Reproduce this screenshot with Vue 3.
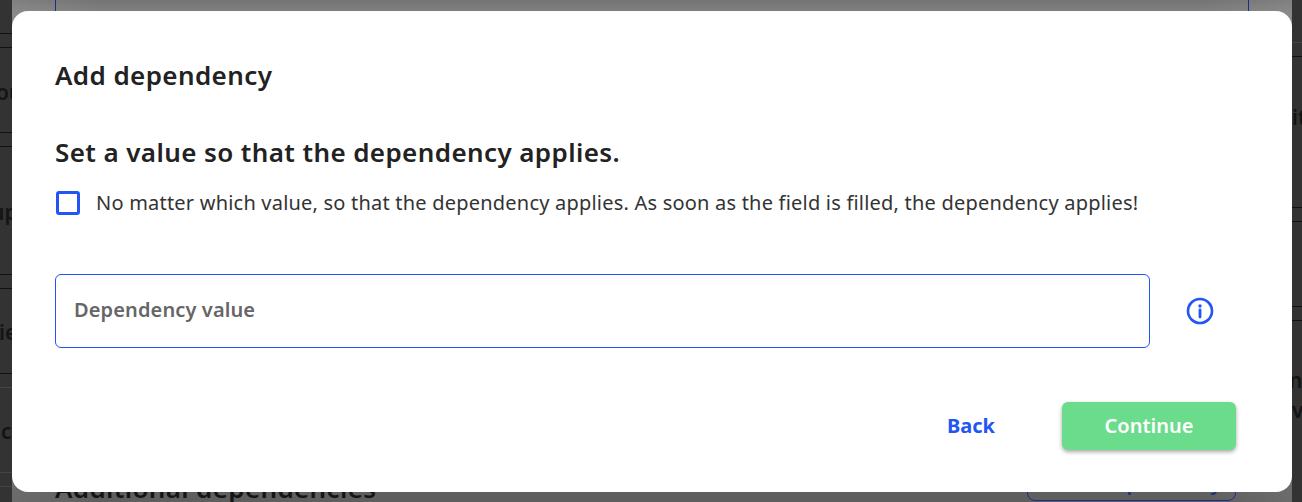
<script setup>
const leftRules = [
  { y: 33, c: '#111' }, { y: 47, c: '#111' }, { y: 132, c: '#111' }, { y: 146, c: '#111' },
  { y: 274, c: '#111' }, { y: 288, c: '#111' }, { y: 373, c: '#111' }, { y: 387, c: '#444' },
  { y: 472, c: '#444' }, { y: 486, c: '#444' }
]
const rightRules = [
  { y: 42, c: '#444' }, { y: 56, c: '#111' }, { y: 207, c: '#111' }, { y: 221, c: '#111' },
  { y: 306, c: '#111' }, { y: 320, c: '#111' }
]
const leftFrags = [
  { t: 'ou', y: 78, x: -4 }, { t: 'up', y: 198, x: -9 }, { t: 'ie', y: 318, x: -1 }, { t: 'cl', y: 417, x: 1 }
]
const rightFrags = [
  { t: 'it', y: 103, x: 0 }, { t: 'ne', y: 366, x: -3 }, { t: 'vi', y: 396, x: 0 }
]
</script>

<template>
  <div class="page">
    <div class="backdrop">
      <div class="side side-left">
        <span v-for="r in leftRules" :key="r.y" class="rule" :style="{ top: r.y + 'px', background: r.c }"></span>
        <span v-for="f in leftFrags" :key="f.t" class="frag" :style="{ top: f.y + 'px', left: f.x + 'px' }">{{ f.t }}</span>
      </div>
      <div class="middle">
        <span class="line line-l"></span>
        <span class="line line-r"></span>
        <div class="under">Additional dependencies</div>
        <div class="under-btn">Add dependency</div>
      </div>
      <div class="side side-right">
        <span v-for="r in rightRules" :key="r.y" class="rule" :style="{ top: r.y + 'px', background: r.c }"></span>
        <span v-for="f in rightFrags" :key="f.t" class="frag" :style="{ top: f.y + 'px', left: f.x + 'px' }">{{ f.t }}</span>
      </div>
    </div>

    <div class="dialog">
      <h2 class="title">Add dependency</h2>
      <h3 class="subtitle">Set a value so that the dependency applies.</h3>
      <label class="check-row">
        <span class="box"></span>
        <span class="check-text">No matter which value, so that the dependency applies. As soon as the field is filled, the dependency applies!</span>
      </label>
      <div class="field-row">
        <div class="field">Dependency value</div>
        <svg class="info" viewBox="0 0 28 28" width="28" height="28" fill="none">
          <circle cx="14" cy="14" r="12" stroke="#2255f5" stroke-width="2.6" />
          <circle cx="14" cy="9" r="1.7" fill="#2255f5" />
          <path d="M14 13v7" stroke="#2255f5" stroke-width="2.8" stroke-linecap="round" />
        </svg>
      </div>
      <div class="actions">
        <button class="back">Back</button>
        <button class="continue">Continue</button>
      </div>
    </div>
  </div>
</template>

<style>
html, body { margin: 0; background: #333; }
</style>

<style scoped>
.page {
  position: relative;
  width: 1302px;
  height: 502px;
  overflow: hidden;
  font-family: "Noto Sans", sans-serif;
  color: #222;
}
.backdrop { position: absolute; inset: 0; display: flex; }
.side { position: relative; width: 12px; background: #333; overflow: hidden; }
.side-right { width: 10px; }
.rule { position: absolute; left: 0; right: 0; height: 1px; }
.frag { position: absolute; font-size: 21px; font-weight: 600; color: #141414; }
.middle {
  position: relative;
  flex: 1;
  overflow: hidden;
  background:
    linear-gradient(90deg, rgba(255, 255, 255, 0.08), rgba(255, 255, 255, 0) 90px, rgba(255, 255, 255, 0) calc(100% - 90px), rgba(255, 255, 255, 0.08)),
    linear-gradient(#747474, #808080 12px, #808080 60%, #5e5e5e);
}
.line { position: absolute; top: 0; width: 1px; height: 11px; background: #1a2f8a; }
.line-l { left: 43px; }
.line-r { left: 1236px; }
.under { position: absolute; left: 43px; top: 470px; font-size: 26px; font-weight: 600; letter-spacing: 0.35px; color: #151515; }
.under-btn {
  position: absolute;
  left: 1015px;
  top: 462px;
  width: 209px;
  height: 39px;
  border: 1px solid #1a2f8a;
  border-radius: 8px;
  box-sizing: border-box;
  padding: 1px 0 0 17px;
  display: flex;
  align-items: center;
  justify-content: center;
  font-size: 20px;
  font-weight: 600;
  color: #1a2f8a;
}
.dialog {
  position: absolute;
  left: 12px;
  top: 11px;
  width: 1280px;
  height: 481px;
  background: #fff;
  border-radius: 16px;
  box-sizing: border-box;
  padding: 46px 43px 0;
  display: flex;
  flex-direction: column;
}
.title { margin: 0; font-size: 26px; letter-spacing: 0.4px; line-height: 36px; font-weight: 600; color: #222; }
.subtitle { margin: 41px 0 0; font-size: 26px; letter-spacing: 0.4px; line-height: 36px; font-weight: 600; color: #222; }
.check-row { display: flex; align-items: center; gap: 16px; margin-top: 19px; }
.box { width: 24px; height: 24px; border: 3px solid #2255f5; border-radius: 3px; box-sizing: border-box; margin-left: 1px; }
.check-text { font-size: 20px; letter-spacing: 0.21px; line-height: 28px; color: #333; }
.field-row { display: flex; align-items: center; margin-top: 57px; }
.field {
  width: 1095px;
  height: 74px;
  border: 1px solid #2255f5;
  border-radius: 6px;
  box-sizing: border-box;
  padding: 0 0 3px 18px;
  display: flex;
  align-items: center;
  font-size: 20px;
  letter-spacing: 0.12px;
  font-weight: 600;
  color: #666;
}
.info { margin-left: 36px; }
.actions { display: flex; justify-content: flex-end; align-items: center; margin-top: 54px; margin-right: 13px; }
button { font-family: inherit; border: none; cursor: pointer; }
.back { background: none; color: #2255f5; font-size: 20px; font-weight: 700; padding: 0 0 2px; margin-right: 67px; }
.continue {
  width: 174px;
  height: 48px;
  padding: 0 0 2px;
  background: #6bdc8b;
  color: #fff;
  font-size: 20px;
  font-weight: 600;
  border-radius: 6px;
  box-shadow: 0 2px 4px rgba(0, 0, 0, 0.35);
}
</style>
